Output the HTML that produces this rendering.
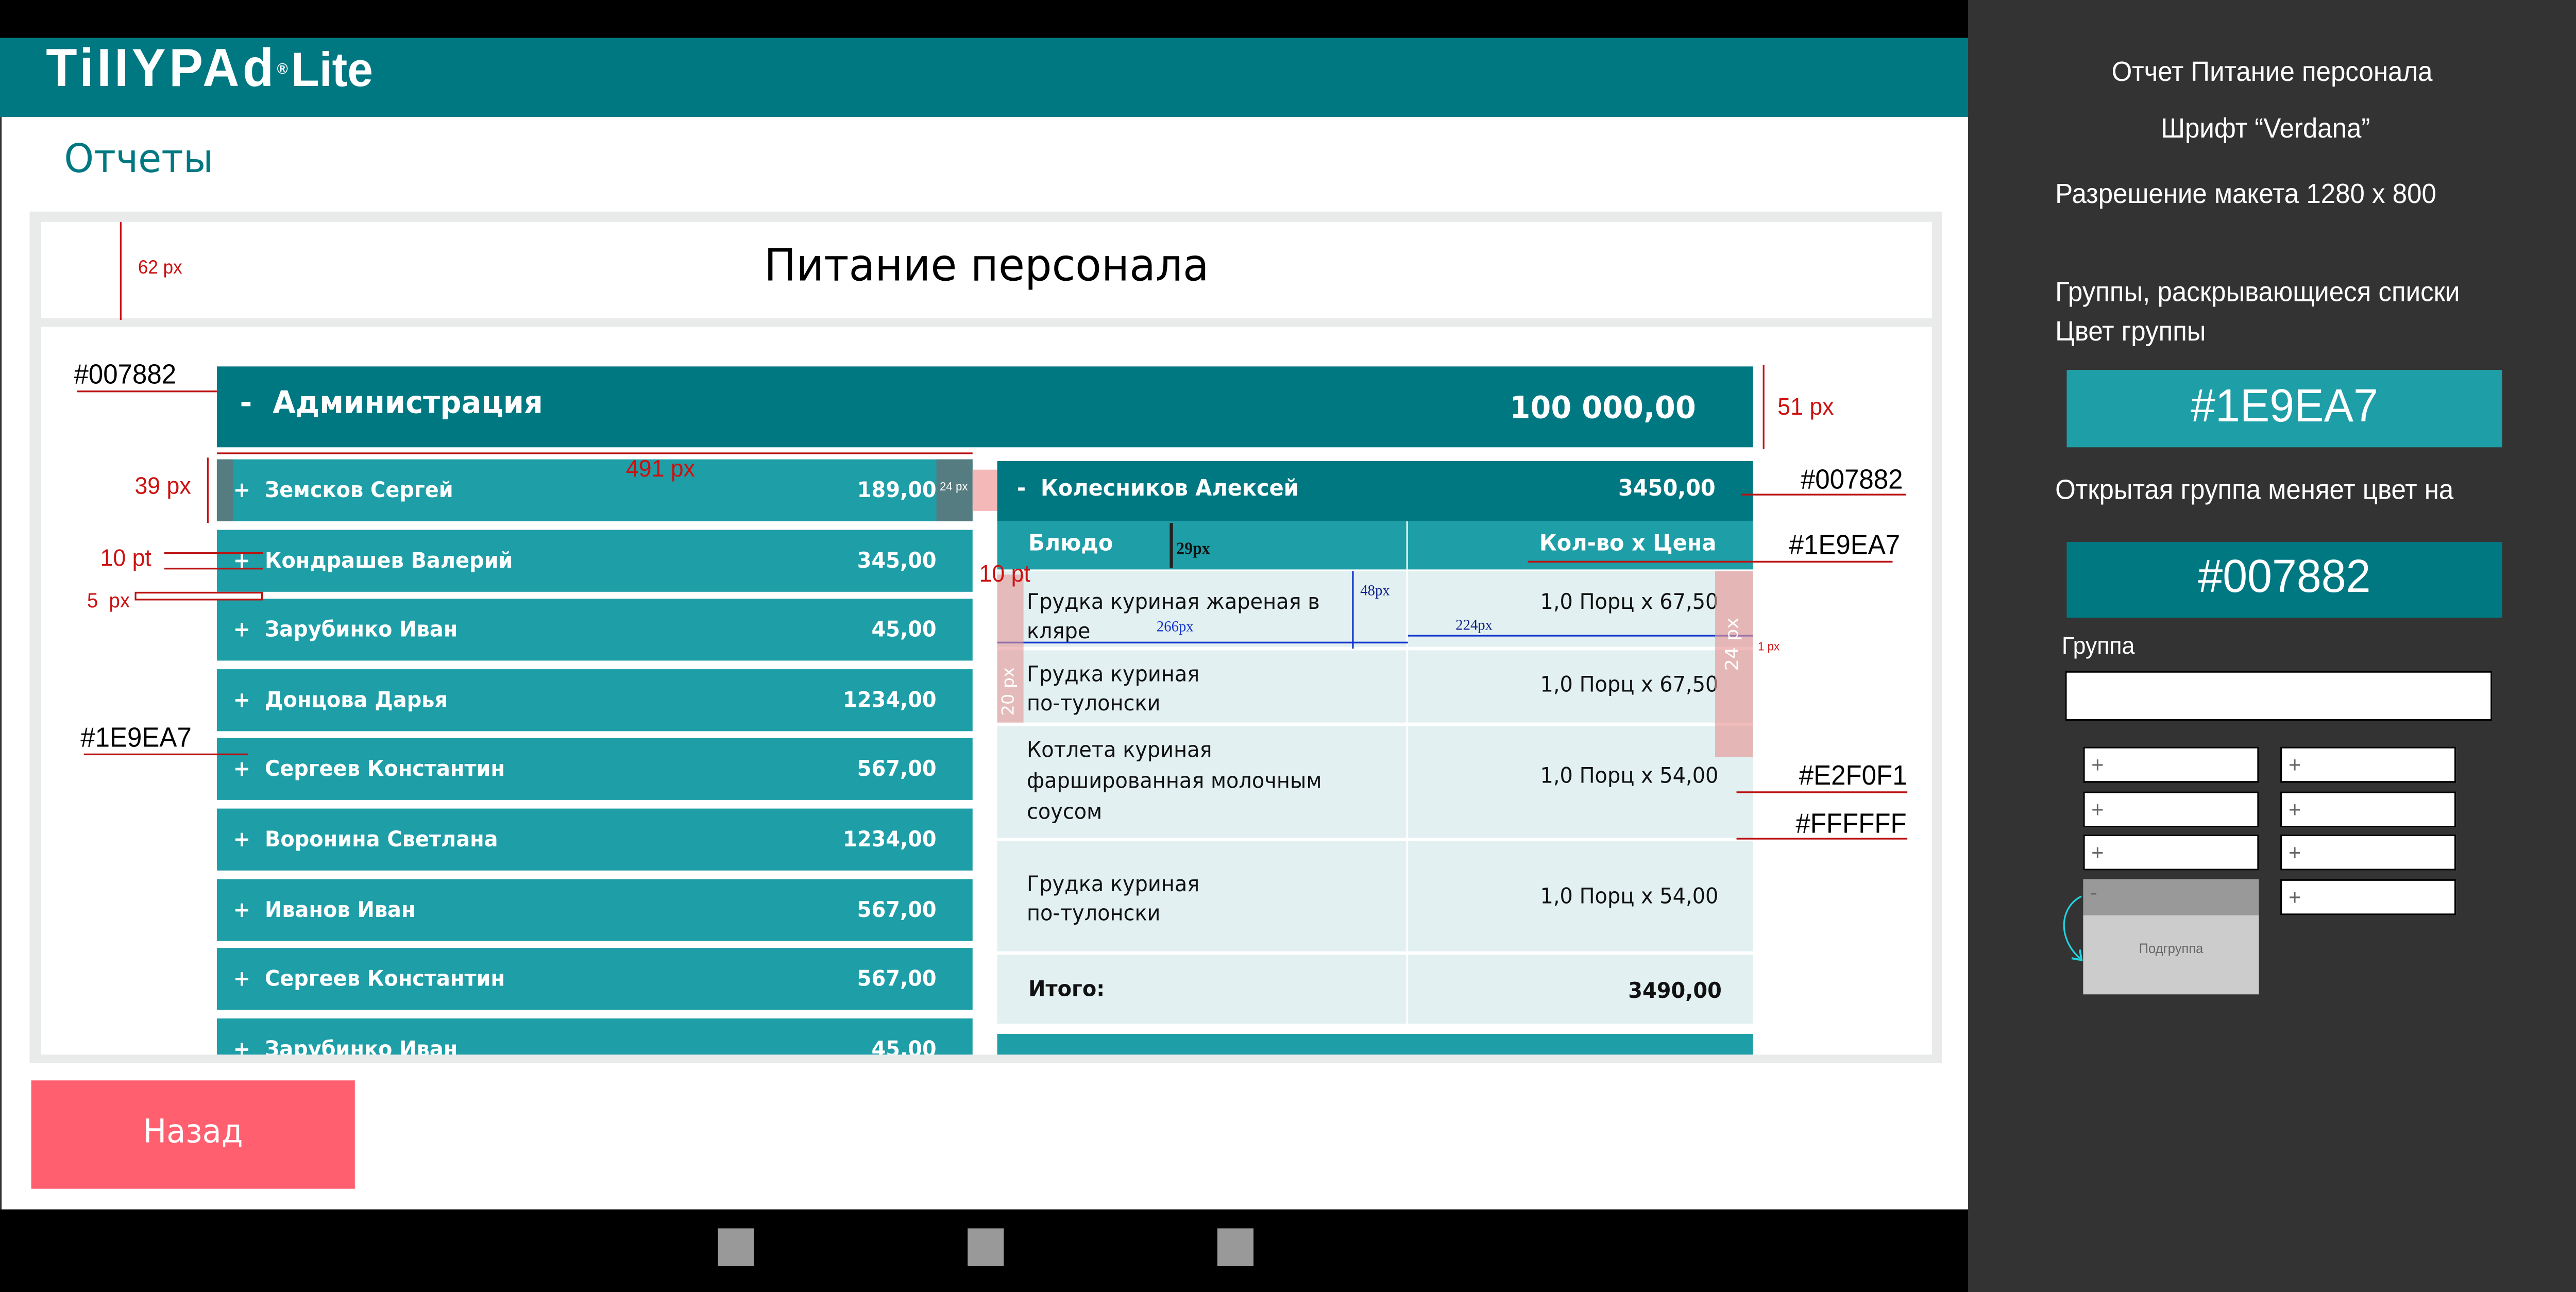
<!DOCTYPE html>
<html><head><meta charset="utf-8">
<style>
html,body{margin:0;padding:0;width:100%;height:100%;overflow:hidden;background:#333}
#s{position:absolute;left:0;top:0;width:1568px;height:751px;transform:scale(3.33929,3.33955);transform-origin:0 0;font-family:"DejaVu Sans","Liberation Sans",sans-serif;overflow:hidden}
.a{position:absolute;box-sizing:border-box}
.t{position:absolute;white-space:nowrap}
.row{position:absolute;left:132px;width:460px;height:36px;background:#1E9EA7;color:#fff;font-weight:bold;font-size:12.5px;line-height:36px}
.row .n{position:absolute;left:10px}
.row .v{position:absolute;right:22px}
.ann{position:absolute;font-family:"Liberation Sans",sans-serif;color:#cc1111;white-space:nowrap}
.blk{position:absolute;font-family:"Liberation Sans",sans-serif;color:#000;white-space:nowrap;font-size:16px}
.rl{position:absolute;height:1px;background:#b11}
.dr{position:absolute;left:607px;width:460px;background:#E2F0F1;font-size:13px;color:#111}
.sb{position:absolute;width:107px;height:21px;background:#fff;border:1px solid #000;color:#666;font-size:13px;line-height:19px;padding-left:4px;box-sizing:border-box;font-family:"Liberation Sans",sans-serif}
.rt{position:absolute;color:#fff;font-family:"Liberation Sans",sans-serif;font-size:16px;white-space:nowrap}
.dt{position:absolute;font-size:12.5px;color:#111;white-space:nowrap}
</style></head><body>
<div id="s">
<div class="a" style="left:0;top:0;width:1198px;height:22px;background:#000"></div>
<div class="a" style="left:0;top:22px;width:1198px;height:46px;background:#007882"></div>
<div class="t" style="left:28px;top:22px;font-family:'Liberation Sans',sans-serif;font-weight:bold;font-size:31px;color:#fff;letter-spacing:2px;line-height:36px">TiIIYPAd<span style="font-size:9px;vertical-align:top">®</span><span style="font-size:28px;letter-spacing:0">Lite</span></div>
<div class="a" style="left:0;top:68px;width:1198px;height:635px;background:#fff;border-left:1px solid #333"></div>
<div class="t" style="left:39px;top:80px;font-size:23px;color:#007882;">Отчеты</div>
<div class="a" style="left:18px;top:123px;width:1164px;height:495px;background:#E9EBEB"></div>
<div class="a" style="left:25px;top:129px;width:1151px;height:56px;background:#fff"></div>
<div class="t" style="left:25px;width:1151px;text-align:center;top:140px;font-size:26px;color:#000">Питание персонала</div>
<div class="a" style="left:25px;top:190px;width:1151px;height:423px;background:#fff"></div>
<div class="a" style="left:132px;top:213px;width:935px;height:47px;background:#007882"></div>
<div class="t" style="left:146px;top:224px;color:#fff;font-weight:bold;font-size:18px">-&nbsp; Администрация</div>
<div class="t" style="left:919px;top:227px;color:#fff;font-weight:bold;font-size:18px">100 000,00</div>

<div class="a" style="left:0;top:0;width:1198px;height:613px;overflow:hidden">
<div class="row" style="top:267px"><span class="n">+&nbsp; Земсков Сергей</span><span class="v">189,00</span></div>
<div class="row" style="top:308px"><span class="n">+&nbsp; Кондрашев Валерий</span><span class="v">345,00</span></div>
<div class="row" style="top:348px"><span class="n">+&nbsp; Зарубинко Иван</span><span class="v">45,00</span></div>
<div class="row" style="top:389px"><span class="n">+&nbsp; Донцова Дарья</span><span class="v">1234,00</span></div>
<div class="row" style="top:429px"><span class="n">+&nbsp; Сергеев Константин</span><span class="v">567,00</span></div>
<div class="row" style="top:470px"><span class="n">+&nbsp; Воронина Светлана</span><span class="v">1234,00</span></div>
<div class="row" style="top:511px"><span class="n">+&nbsp; Иванов Иван</span><span class="v">567,00</span></div>
<div class="row" style="top:551px"><span class="n">+&nbsp; Сергеев Константин</span><span class="v">567,00</span></div>
<div class="row" style="top:592px"><span class="n">+&nbsp; Зарубинко Иван</span><span class="v">45,00</span></div>
<div class="a" style="left:607px;top:601px;width:460px;height:30px;background:#1E9EA7"></div>
</div>
<div class="a" style="left:132px;top:267px;width:10px;height:36px;background:#557c80"></div>
<div class="a" style="left:570px;top:267px;width:22px;height:36px;background:#557c80"></div>
<div class="t" style="left:572px;top:280px;font-size:7px;color:#fff;font-family:'Liberation Sans'">24 px</div>
<div class="a" style="left:592px;top:273px;width:15px;height:24px;background:#f4b8b8"></div>

<div class="a" style="left:607px;top:268px;width:460px;height:35px;background:#007882"></div>
<div class="t" style="left:619px;top:277px;color:#fff;font-weight:bold;font-size:13px">-&nbsp; Колесников Алексей</div>
<div class="t" style="left:985px;top:277px;color:#fff;font-weight:bold;font-size:13px">3450,00</div>
<div class="a" style="left:607px;top:303px;width:460px;height:28px;background:#1E9EA7"></div>
<div class="a" style="left:856px;top:303px;width:1px;height:28px;background:#e2f0f1"></div>
<div class="t" style="left:626px;top:309px;color:#fff;font-weight:bold;font-size:13px">Блюдо</div>
<div class="t" style="left:937px;top:309px;color:#fff;font-weight:bold;font-size:13px">Кол-во х Цена</div>
<div class="a" style="left:712px;top:304px;width:2px;height:26px;background:#222"></div>
<div class="t" style="left:716px;top:314px;font-size:10px;font-weight:bold;color:#111;font-family:'Liberation Serif'">29px</div>

<div class="dr" style="top:332px;height:44px"></div>
<div class="dr" style="top:378px;height:42px"></div>
<div class="dr" style="top:422px;height:65px"></div>
<div class="dr" style="top:489px;height:64px"></div>
<div class="dr" style="top:555px;height:40px"></div>
<div class="a" style="left:856px;top:332px;width:1px;height:263px;background:#fff"></div>
<div class="dt" style="left:625px;top:341px;line-height:17px">Грудка куриная жареная в<br>кляре</div>
<div class="dt" style="left:625px;top:383px;line-height:17px">Грудка куриная<br>по-тулонски</div>
<div class="dt" style="left:625px;top:427px;line-height:18px">Котлета куриная<br>фаршированная молочным<br>соусом</div>
<div class="dt" style="left:625px;top:505px;line-height:17px">Грудка куриная<br>по-тулонски</div>
<div class="dt" style="left:626px;top:567px;font-weight:bold">Итого:</div>
<div class="dt" style="right:522px;top:342px">1,0 Порц х 67,50</div>
<div class="dt" style="right:522px;top:390px">1,0 Порц х 67,50</div>
<div class="dt" style="right:522px;top:443px">1,0 Порц х 54,00</div>
<div class="dt" style="right:522px;top:513px">1,0 Порц х 54,00</div>
<div class="dt" style="right:520px;top:568px;font-weight:bold">3490,00</div>
<div class="a" style="left:607px;top:373px;width:250px;height:1px;background:#1133cc"></div>
<div class="a" style="left:857px;top:369px;width:210px;height:1px;background:#1133cc"></div>
<div class="a" style="left:823px;top:332px;width:1px;height:45px;background:#1133cc"></div>
<div class="t" style="left:704px;top:359px;font-size:9px;color:#1133cc;font-family:'Liberation Serif'">266px</div>
<div class="t" style="left:828px;top:338px;font-size:9px;color:#112288;font-family:'Liberation Serif'">48px</div>
<div class="t" style="left:886px;top:358px;font-size:9px;color:#112288;font-family:'Liberation Serif'">224px</div>
<div class="a" style="left:607px;top:334px;width:16px;height:86px;background:rgba(230,150,150,.6)"></div>
<div class="a" style="left:1044px;top:332px;width:23px;height:108px;background:rgba(230,150,150,.65)"></div>
<div class="t" style="left:1048px;top:390px;font-size:11px;color:#fff;transform:rotate(-90deg);transform-origin:left top;">24 px</div>
<div class="t" style="left:609px;top:416px;font-size:10px;color:#fff;transform:rotate(-90deg);transform-origin:left top;">20 px</div>

<div class="a" style="left:73px;top:129px;width:1px;height:57px;background:#c11"></div>
<div class="ann" style="left:84px;top:150px;font-size:11px">62 px</div>
<div class="blk" style="left:45px;top:210px">#007882</div>
<div class="rl" style="left:47px;top:227px;width:85px"></div>
<div class="ann" style="left:82px;top:274px;font-size:14px">39 px</div>
<div class="a" style="left:126px;top:266px;width:1px;height:38px;background:#c11"></div>
<div class="rl" style="left:132px;top:263px;width:460px"></div>
<div class="ann" style="left:381px;top:264px;font-size:14px">491 px</div>
<div class="ann" style="left:61px;top:316px;font-size:14px">10 pt</div>
<div class="rl" style="left:100px;top:321px;width:60px"></div>
<div class="rl" style="left:100px;top:330px;width:60px"></div>
<div class="ann" style="left:53px;top:342px;font-size:12px">5&nbsp; px</div>
<div class="a" style="left:82px;top:344px;width:78px;height:5px;border:1px solid #b11"></div>
<div class="blk" style="left:49px;top:421px">#1E9EA7</div>
<div class="rl" style="left:51px;top:438px;width:100px"></div>
<div class="ann" style="left:596px;top:325px;font-size:14px">10 pt</div>
<div class="a" style="left:1073px;top:212px;width:1px;height:49px;background:#c11"></div>
<div class="ann" style="left:1082px;top:228px;font-size:14px">51 px</div>
<div class="blk" style="left:1096px;top:271px">#007882</div>
<div class="rl" style="left:1060px;top:287px;width:100px"></div>
<div class="blk" style="left:1089px;top:309px">#1E9EA7</div>
<div class="rl" style="left:930px;top:326px;width:222px"></div>
<div class="ann" style="left:1070px;top:373px;font-size:7px">1 px</div>
<div class="blk" style="left:1095px;top:443px">#E2F0F1</div>
<div class="rl" style="left:1057px;top:460px;width:104px"></div>
<div class="blk" style="left:1093px;top:471px">#FFFFFF</div>
<div class="rl" style="left:1057px;top:487px;width:104px"></div>

<div class="a" style="left:19px;top:628px;width:197px;height:63px;background:#FF5F6E"></div>
<div class="t" style="left:19px;width:197px;text-align:center;top:647px;color:#fff;font-size:19px">Назад</div>

<div class="a" style="left:0;top:703px;width:1198px;height:48px;background:#000"></div>
<div class="a" style="left:437px;top:714px;width:22px;height:22px;background:#999"></div>
<div class="a" style="left:589px;top:714px;width:22px;height:22px;background:#999"></div>
<div class="a" style="left:741px;top:714px;width:22px;height:22px;background:#999"></div>

<div class="a" style="left:1198px;top:0;width:370px;height:751px;background:#333"></div>
<div class="rt" style="left:1198px;width:370px;text-align:center;top:34px">Отчет Питание персонала</div>
<div class="rt" style="left:1198px;width:362px;text-align:center;top:67px">Шрифт “Verdana”</div>
<div class="rt" style="left:1251px;top:105px">Разрешение макета 1280 х 800</div>
<div class="rt" style="left:1251px;top:162px">Группы, раскрывающиеся списки</div>
<div class="rt" style="left:1251px;top:185px">Цвет группы</div>
<div class="a" style="left:1258px;top:215px;width:265px;height:45px;background:#1E9EA7"></div>
<div class="rt" style="left:1258px;width:265px;text-align:center;top:221px;font-size:27px">#1E9EA7</div>
<div class="rt" style="left:1251px;top:277px">Открытая группа меняет цвет на</div>
<div class="a" style="left:1258px;top:315px;width:265px;height:44px;background:#007882"></div>
<div class="rt" style="left:1258px;width:265px;text-align:center;top:320px;font-size:27px">#007882</div>
<div class="rt" style="left:1255px;top:367px;font-size:14px">Группа</div>
<div class="a" style="left:1257px;top:390px;width:260px;height:29px;background:#fff;border:1px solid #000"></div>
<div class="sb" style="left:1268px;top:434px">+</div>
<div class="sb" style="left:1268px;top:460px">+</div>
<div class="sb" style="left:1268px;top:485px">+</div>
<div class="sb" style="left:1388px;top:434px">+</div>
<div class="sb" style="left:1388px;top:460px">+</div>
<div class="sb" style="left:1388px;top:485px">+</div>
<div class="sb" style="left:1388px;top:511px">+</div>
<div class="a" style="left:1268px;top:511px;width:107px;height:21px;background:#999;color:#666;font-size:13px;line-height:18px;padding-left:4px">-</div>
<div class="a" style="left:1268px;top:532px;width:107px;height:46px;background:#ccc"></div>
<div class="t" style="left:1268px;width:107px;text-align:center;top:547px;font-size:8px;color:#666;font-family:'Liberation Sans'">Подгруппа</div>
<svg class="a" style="left:1250px;top:518px" width="20" height="44" viewBox="0 0 20 44"><path d="M17 3 C4 9 2 27 16 39" fill="none" stroke="#22d3e0" stroke-width="1"/><path d="M11 39 L17 40 L16 34" fill="none" stroke="#22d3e0" stroke-width="1.2"/></svg>
</div>
<script>
(function(){var w=document.documentElement.clientWidth||window.innerWidth,h=document.documentElement.clientHeight||window.innerHeight;
if(w&&h){document.getElementById('s').style.transform='scale('+(w/1568)+','+(h/751)+')';}})();
</script>
</body></html>
